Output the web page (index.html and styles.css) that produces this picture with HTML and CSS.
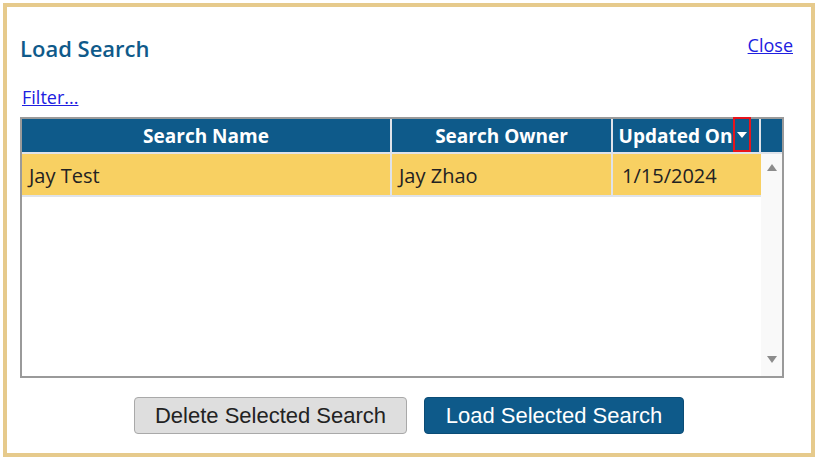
FILE: index.html
```html
<!DOCTYPE html>
<html lang="en">
<head>
  <meta charset="UTF-8" />
  <title>Load Search</title>
  <link rel="stylesheet" href="styles.css">
</head>
<body>
  <div class="dialog">
    <div class="dialog-head">
      <h2 class="title">Load Search</h2>
      <a href="#" class="close-link">Close</a>
    </div>
    <a href="#" class="filter-link">Filter...</a>

    <!-- Saved searches grid -->
    <div class="grid">
      <div class="grid-head">
        <div class="cell col-name">Search Name</div>
        <div class="cell col-owner">Search Owner</div>
        <div class="cell col-date">
          Updated On<span class="sort-btn"><svg viewBox="0 0 10 6" class="sort-icon"><path d="M0 0h10L5 6z"/></svg></span>
        </div>
        <div class="cell col-scroll"></div>
      </div>
      <div class="grid-body">
        <div class="rows">
          <div class="row selected">
            <div class="cell col-name">Jay Test</div>
            <div class="cell col-owner">Jay Zhao</div>
            <div class="cell col-date">1/15/2024</div>
          </div>
        </div>
        <div class="scrollbar">
          <svg viewBox="0 0 10 7" class="arrow"><path d="M5 0l5 7H0z"/></svg>
          <svg viewBox="0 0 10 7" class="arrow"><path d="M0 0h10L5 7z"/></svg>
        </div>
      </div>
    </div>

    <div class="actions">
      <button class="btn btn-delete">Delete Selected Search</button>
      <button class="btn btn-load">Load Selected Search</button>
    </div>
  </div>
</body>
</html>
```

FILE: styles.css
```css
body {
  margin: 0;
  background: #fff;
  font-family: "Open Sans", Arial, sans-serif;
  color: #222;
}

.dialog {
  box-sizing: border-box;
  width: 812px;
  height: 454px;
  margin: 3px;
  border: 4px solid #e6ca8c;
  padding: 26px 18px 0 13px;
}

.dialog-head {
  display: flex;
  justify-content: space-between;
  align-items: flex-start;
}

.title {
  margin: 0;
  font-size: 22px;
  line-height: 30px;
  font-weight: 600;
  color: #0f5a8a;
}

.close-link,
.filter-link {
  font-size: 18px;
  line-height: 24px;
  color: #2020e0;
  text-decoration: underline;
}

.filter-link {
  display: inline-block;
  margin: 22px 0 0 2px;
}

/* grid */
.grid {
  box-sizing: border-box;
  width: 764px;
  height: 261px;
  margin-top: 8px;
  border: 2px solid #9a9a9a;
  display: flex;
  flex-direction: column;
}

.grid-head {
  display: flex;
  height: 33px;
  border-bottom: 2px solid #dfe3ea;
  background: #fff;
}

.grid-head .cell {
  background: #0e5a8a;
  color: #fff;
  font-weight: 700;
  font-size: 19px;
  display: flex;
  align-items: center;
  justify-content: center;
  border-right: 2px solid #dfe3ea;
}

.grid-head .col-date {
  padding-right: 2px;
}

.grid-head .col-scroll {
  border-right: none;
  flex: 1;
}

.cell {
  box-sizing: border-box;
  white-space: nowrap;
}

.col-name { width: 370px; }
.col-owner { width: 221px; }
.col-date { width: 148px; }

.sort-btn {
  box-sizing: border-box;
  width: 18px;
  height: 35px;
  margin: -2px 0 0 1px;
  border: 2px solid #e8141c;
  display: flex;
  align-items: center;
  justify-content: center;
}

.sort-icon {
  width: 10px;
  height: 6px;
  fill: #fff;
}

.grid-body {
  flex: 1;
  display: flex;
}

.rows {
  width: 739px;
}

.row {
  display: flex;
  height: 43px;
}

.row .cell {
  display: flex;
  align-items: center;
  font-size: 20px;
  padding: 2px 0 0 7px;
  border-right: 2px solid #dfe3ea;
  border-bottom: 2px solid #dfe3ea;
}

.row .col-date {
  padding-left: 9px;
  border-right: none;
}

.row.selected .cell {
  background: #f8d062;
}

.scrollbar {
  flex: 1;
  background: #f9f9f9;
  display: flex;
  flex-direction: column;
  justify-content: space-between;
  align-items: center;
  padding: 10px 0 13px;
}

.arrow {
  width: 10px;
  height: 7px;
  fill: #8c8c8c;
}

/* buttons */
.actions {
  display: flex;
  justify-content: center;
  gap: 17px;
  margin: 19px 0 0 -13px;
  width: 804px;
}

.btn {
  height: 37px;
  font-family: "Liberation Sans", Arial, sans-serif;
  font-size: 22px;
  border-radius: 4px;
  padding: 0;
  cursor: pointer;
}

.btn-delete {
  width: 273px;
  background: #dedede;
  border: 1px solid #a9a9a9;
  color: #222;
}

.btn-load {
  width: 260px;
  background: #0e5a8a;
  border: 1px solid #0b4c76;
  color: #fff;
}
```
